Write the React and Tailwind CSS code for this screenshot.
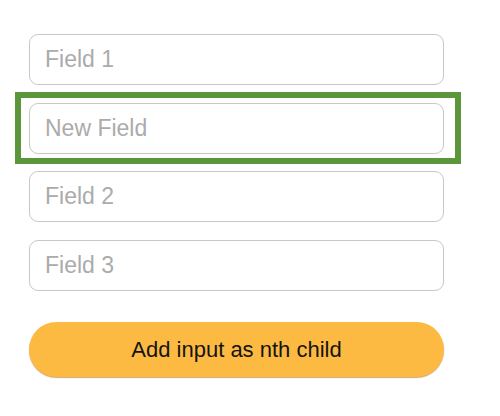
import React from "react";

function Field({ placeholder }) {
  return (
    <input
      type="text"
      placeholder={placeholder}
      className="block h-[51px] w-full rounded-[9px] border border-[#c8c8c8] bg-white px-[15px] text-[23px] text-[#333] outline-none placeholder:text-[#ababab]"
      style={{ fontFamily: '"Liberation Sans", Arial, sans-serif' }}
    />
  );
}

export default function App() {
  return (
    <div
      className="h-[416px] w-[500px] bg-white pl-[29px] pt-[34px]"
      style={{ fontFamily: '"Liberation Sans", Arial, sans-serif' }}
    >
      <div className="flex w-[415px] flex-col gap-[17.5px]">
        <Field placeholder="Field 1" />
        <div className="relative">
          <Field placeholder="New Field" />
          <div className="pointer-events-none absolute -top-[10.5px] -bottom-[10.5px] -left-[14px] -right-[17px] border-[6px] border-[#5c963b]" />
        </div>
        <Field placeholder="Field 2" />
        <Field placeholder="Field 3" />
      </div>
      <button
        type="button"
        className="mt-[31px] flex h-[55px] w-[415px] items-center justify-center rounded-full bg-[#fdba42] text-[22px] text-[#141414] shadow-[0_1px_1px_rgba(180,110,20,0.6)]"
      >
        Add input as nth child
      </button>
    </div>
  );
}
